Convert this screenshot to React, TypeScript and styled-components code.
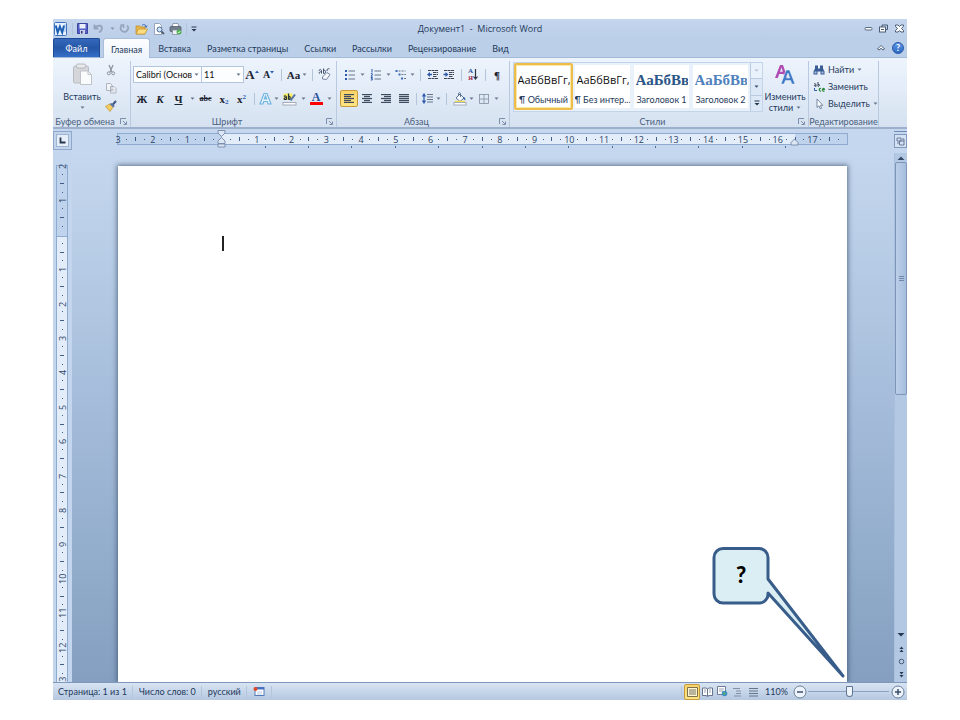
import React from "react";
import styled, { createGlobalStyle, css } from "styled-components";

const UI = `Lato, Roboto, "Open Sans", sans-serif`;
const HUMANIST = `"Open Sans", "Noto Sans", sans-serif`;
const SERIF = `"Liberation Serif", serif`;
const INK = "#1e395b";

const GlobalStyle = createGlobalStyle`
  *, *::before, *::after { box-sizing: border-box; }
  body { margin: 0; background: #fff; font-family: ${UI}; font-size: 9px; color: ${INK}; }
  button, input { font: inherit; color: inherit; }
  button { background: none; border: 0; padding: 0; margin: 0; }
  svg { display: block; flex: none; }
`;

const Stage = styled.div`
  display: flex;
  min-height: 100vh;
  padding: 19px 53px 20px;
`;

const Window = styled.div`
  position: relative;
  flex: 1;
  min-width: 0;
  display: flex;
  flex-direction: column;
  background: #bfd2ea;
`;

/* ---------- title bar ---------- */
const TitleBar = styled.header`
  display: grid;
  grid-template-columns: 1fr auto 1fr;
  align-items: center;
  height: 19px;
  background: linear-gradient(#c4d6ee, #bccfe8);
`;

const QuickAccess = styled.div`
  display: flex;
  align-items: center;
  padding-left: 1px;
`;

const Title = styled.h1`
  margin: 0;
  font-family: ${HUMANIST};
  font-size: 9px;
  font-weight: 400;
  line-height: 12px;
  white-space: pre;
`;

const WindowButtons = styled.div`
  display: flex;
  justify-content: flex-end;
`;

const Slot = styled.button<{ $w: number; $h?: number; $on?: boolean }>`
  display: flex;
  align-items: center;
  justify-content: center;
  flex: none;
  width: ${(p) => p.$w}px;
  height: ${(p) => p.$h ?? 16}px;
  ${(p) =>
    p.$on &&
    css`
      border: 1px solid #c79a3c;
      border-radius: 2px;
      background: linear-gradient(#fbd46a, #ffe584);
    `}
`;

const SepBox = styled.span<{ $w: number }>`
  display: flex;
  justify-content: center;
  flex: none;
  width: ${(p) => p.$w}px;
  height: 12px;
  &::before {
    content: "";
    width: 1px;
    background: #b3c4db;
  }
`;

/* ---------- tabs ---------- */
const TabBar = styled.nav`
  display: flex;
  align-items: stretch;
  height: 20px;
  background: #bccfe8;
  border-bottom: 1px solid #a3b9d8;
`;

const FileTab = styled.button`
  width: 47px;
  margin-right: 3px;
  color: #fff;
  border: 1px solid #1d4a94;
  border-bottom: 0;
  border-radius: 2px 2px 0 0;
  background: linear-gradient(#3568bb, #2557a8 50%, #3470c8);
`;

const Tab = styled.button<{ $active?: boolean }>`
  padding: 2px 8px 0;
  white-space: nowrap;
  ${(p) =>
    p.$active &&
    css`
      padding: 1px 7px 0;
      margin-bottom: -1px;
      border: 1px solid #a9bfdc;
      border-bottom: 0;
      border-radius: 3px 3px 0 0;
      background: linear-gradient(#fdfeff, #eef4fc);
    `}
`;

const TabEnd = styled.div`
  display: flex;
  align-items: center;
  margin-left: auto;
`;

/* ---------- ribbon ---------- */
const Ribbon = styled.section`
  display: flex;
  height: 71px;
  padding-top: 3px;
  background: linear-gradient(#edf4fc, #dfe9f6 60%, #d5e1f0);
  border-bottom: 2px solid #9cb0cc;
`;

const GroupBox = styled.div<{ $w?: number }>`
  display: flex;
  flex-direction: column;
  flex: none;
  ${(p) => (p.$w ? `width: ${p.$w}px;` : "")}
  border-right: 1px solid #b9c9df;
`;

const GroupBody = styled.div<{ $pad?: number }>`
  display: flex;
  flex: 1;
  min-height: 0;
  padding-left: ${(p) => p.$pad ?? 0}px;
`;

const GroupFooter = styled.div`
  display: flex;
  align-items: center;
  height: 12px;
  color: #4a5f80;
`;

const GroupTitle = styled.span`
  flex: 1;
  text-align: center;
  white-space: nowrap;
`;

const Rows = styled.div`
  display: flex;
  flex-direction: column;
  gap: 7px;
  padding-top: 5px;
`;

const Row = styled.div`
  display: flex;
  align-items: center;
  height: 17px;
`;

const SmallCol = styled.div`
  display: flex;
  flex-direction: column;
  gap: 1px;
`;

const BigButton = styled.button<{ $w: number }>`
  display: flex;
  flex-direction: column;
  align-items: center;
  width: ${(p) => p.$w}px;
  padding-top: 2px;
  line-height: 11px;
  & > svg { margin-bottom: 6px; }
`;

const BigLabel = styled.span`
  display: flex;
  align-items: center;
  gap: 3px;
  height: 11px;
`;

const Combo = styled.label<{ $w: number }>`
  display: flex;
  align-items: center;
  width: ${(p) => p.$w}px;
  height: 17px;
  padding: 0 2px;
  border: 1px solid #b4c6de;
  background: #fbfdff;
  color: #111;
  & + & { border-left: 0; }
  input {
    flex: 1;
    min-width: 0;
    padding: 0;
    border: 0;
    outline: 0;
    background: none;
  }
`;

const Glyph = styled.span<{ $size?: number; $italic?: boolean; $u?: boolean; $strike?: boolean }>`
  font-family: ${SERIF};
  font-weight: 700;
  font-size: ${(p) => p.$size ?? 11}px;
  line-height: 12px;
  color: #1c2430;
  font-style: ${(p) => (p.$italic ? "italic" : "normal")};
  text-decoration: ${(p) => (p.$u ? "underline" : p.$strike ? "line-through" : "none")};
  sub, sup { font-size: 7px; line-height: 0; color: #2a5db0; }
  sub { vertical-align: -1px; }
  sup { vertical-align: 4px; }
`;

const Gallery = styled.div`
  display: flex;
  flex: none;
  height: 50px;
  margin-top: 1px;
  border: 1px solid #c3d3e8;
  background: #e9f1fb;
`;

const StyleCard = styled.button<{ $on?: boolean }>`
  display: flex;
  flex-direction: column;
  align-items: center;
  width: 59px;
  height: 47px;
  overflow: hidden;
  border: 2px solid ${(p) => (p.$on ? "#ecbd4b" : "#e9f1fb")};
  border-radius: 2px;
  background: #fff;
  box-shadow: ${(p) => (p.$on ? "inset 0 0 0 1px #fde9a6" : "none")};
`;

const Sample = styled.span<{ $heading?: string }>`
  display: block;
  width: 52px;
  height: 29px;
  overflow: hidden;
  text-align: left;
  white-space: nowrap;
  line-height: 30px;
  color: ${(p) => p.$heading ?? "#111"};
  font-family: ${(p) => (p.$heading ? SERIF : HUMANIST)};
  font-weight: ${(p) => (p.$heading ? 700 : 400)};
  font-size: ${(p) => (p.$heading ? 15 : 11)}px;
`;

const StyleName = styled.span`
  line-height: 12px;
  white-space: nowrap;
`;

const GalleryNav = styled.div`
  display: flex;
  flex-direction: column;
  width: 12px;
  border-left: 1px solid #b9cae2;
  button { flex: 1; display: flex; align-items: center; justify-content: center; }
  button + button { border-top: 1px solid #b9cae2; background: #dde8f6; }
`;

const EditList = styled.div`
  display: flex;
  flex-direction: column;
  padding-left: 4px;
`;

const EditButton = styled.button`
  display: flex;
  align-items: center;
  gap: 3px;
  height: 17px;
  white-space: nowrap;
`;

/* ---------- rulers and work area ---------- */
const RulerRow = styled.div`
  display: flex;
  height: 24px;
  padding-top: 2px;
  background: #c5d7ee;
`;

const TabSelector = styled.button`
  display: flex;
  align-items: center;
  justify-content: center;
  width: 19px;
  height: 19px;
  border: 1px solid #8ea8cb;
  background: #e6effa;
  box-shadow: inset 0 0 0 2px #c2d4ec, inset 0 0 0 3px #9db4d3;
`;

const HRuler = styled.div`
  position: relative;
  flex: 1;
  margin: 2px 47px 0 46px;
  font-family: ${HUMANIST};
`;

const HScale = styled.div`
  display: flex;
  height: 12px;
  border: solid #8fabcf;
  border-width: 1px 0;
  box-shadow: 1px 0 #8fabcf, -1px 0 #8fabcf;
  background: linear-gradient(90deg, #c0d3ec 14.3%, #e3edfa 14.3% 92.9%, #c0d3ec 92.9%);
`;

const HCell = styled.div`
  display: flex;
  flex: 1;
  align-items: center;
  justify-content: space-between;
`;

const Label = styled.span`
  display: flex;
  align-items: center;
  justify-content: center;
  width: 0;
  height: 0;
  color: #2c4568;
`;

const VLabel = styled(Label)`
  writing-mode: vertical-rl;
  transform: rotate(180deg);
`;

const Dot = styled.i`
  width: 1px;
  height: 1px;
  background: #3f5d88;
`;
const Tick = styled.i<{ $v?: boolean }>`
  width: ${(p) => (p.$v ? 4 : 1)}px;
  height: ${(p) => (p.$v ? 1 : 4)}px;
  background: #3f5d88;
`;
const End = styled.i`
  width: 0;
  height: 0;
`;

const TabStops = styled.div`
  display: grid;
  grid-template-columns: 12fr repeat(13, 5fr) 7fr;
  height: 2px;
  margin-top: 1px;
  i { border-right: 1px solid #4c6c98; }
  i:first-child, i:last-child { border: 0; }
`;

const IndentLeft = styled.span`
  position: absolute;
  left: 14.3%;
  top: -3px;
  margin-left: -5px;
`;
const IndentRight = styled.span`
  position: absolute;
  left: 92.9%;
  top: 5px;
  margin-left: -5px;
`;

const RulerToggle = styled.button`
  display: flex;
  align-items: center;
  justify-content: center;
  width: 13px;
  height: 14px;
  margin-top: 3px;
  border: 1px solid #7f99bd;
  background: #d5e2f3;
  box-shadow: 0 -2px #c5d7ee, 0 -3px #6f8bb3;
`;

const Work = styled.div`
  display: flex;
  flex: 1;
  min-height: 0;
  background: linear-gradient(#c5d7ee, #a6bedb 45%, #849fc0);
`;

const VRulerStrip = styled.div`
  width: 19px;
  padding: 12px 4px 0 3px;
  overflow: hidden;
  font-family: ${HUMANIST};
  background: #c3d6ee;
`;

const VScale = styled.div`
  display: flex;
  flex-direction: column;
  height: 100%;
  border: solid #8fabcf;
  border-width: 1px 1px 0;
  background: linear-gradient(#c0d3ec 13.6%, #8fabcf 13.6% 13.8%, #e3edfa 13.8%);
`;

const VCell = styled.div`
  display: flex;
  flex: 1;
  flex-direction: column;
  align-items: center;
  justify-content: space-between;
`;

const VTail = styled.div`
  display: flex;
  justify-content: center;
`;

const Canvas = styled.main`
  display: flex;
  flex: 1;
  padding: 13px 47px 0 46px;
  overflow: hidden;
`;

const Page = styled.article`
  flex: 1;
  padding: 70px 104px 0;
  background: #fff;
  box-shadow: 0 0 5px 1px rgba(50, 70, 100, 0.7);
`;

const Caret = styled.span`
  display: block;
  width: 2px;
  height: 15px;
  background: #222;
`;

const ScrollBar = styled.aside`
  display: flex;
  flex-direction: column;
  align-items: center;
  width: 13px;
  background: #b3c8e3;
  border-left: 1px solid #a9bfdc;
`;

const Thumb = styled.div`
  display: flex;
  align-items: center;
  justify-content: center;
  align-self: stretch;
  height: 44%;
  border: 1px solid #7d96b8;
  border-radius: 2px;
  background: linear-gradient(90deg, #bccfe9, #a5bddc);
`;

const ScrollFoot = styled.div`
  display: flex;
  flex-direction: column;
  align-items: center;
  align-self: stretch;
  margin-top: auto;
`;

/* ---------- status bar ---------- */
const StatusBar = styled.footer`
  display: flex;
  align-items: center;
  height: 18px;
  padding-left: 5px;
  border-top: 1px solid #7f99bd;
  background: linear-gradient(#d8e4f3, #b5c8e0);
`;

const StatusItem = styled.button`
  white-space: nowrap;
`;

const StatusRight = styled.div`
  display: flex;
  align-items: center;
  margin-left: auto;
`;

const ZoomValue = styled.button`
  width: 31px;
  text-align: center;
`;

const ZoomSlider = styled.input`
  width: 81px;
  height: 14px;
  margin: 0;
  appearance: none;
  background: linear-gradient(#8da3c0, #8da3c0) center / 100% 1px no-repeat;
  &::-webkit-slider-thumb {
    appearance: none;
    width: 7px;
    height: 11px;
    border: 1px solid #5f7696;
    border-radius: 1px 1px 4px 4px;
    background: #f0f5fb;
  }
`;

const Callout = styled.div`
  position: absolute;
  right: 60px;
  bottom: 20px;
  width: 135px;
  height: 134px;
`;

const CalloutText = styled.strong`
  position: absolute;
  left: 0;
  top: 16px;
  width: 58px;
  text-align: center;
  font-family: Lato, ${UI};
  font-size: 22px;
  font-weight: 900;
  line-height: 26px;
  color: #000;
`;

/* ---------- icons ---------- */
type IconProps = { w?: number; h?: number; children: React.ReactNode };
const Icon = ({ w = 14, h = 14, children }: IconProps) => (
  <svg width={w} height={h} viewBox={`0 0 ${w} ${h}`} fill="none" aria-hidden="true">
    {children}
  </svg>
);

const Down = ({ c = "#66758c" }: { c?: string }) => (
  <Icon w={5} h={3}>
    <path d="M0.500 0.500h4L2.500 2.700z" fill={c} />
  </Icon>
);

const WordLogo = () => (
  <Icon>
    <rect x="0.500" y="0.500" width="12" height="13" rx="1" fill="#e9f2fd" stroke="#3d74c0" />
    <path d="M10 3h2M10 5h2M10 7h2M10 9h2" stroke="#8fb0e0" strokeWidth="0.800" />
    <path d="M1.800 3.500L3.700 10.500 5.900 4.500 8.200 10.500 10 3.500" stroke="#1b5fb4" strokeWidth="2" />
  </Icon>
);
const Save = () => (
  <Icon w={11} h={11}>
    <path d="M0.500 0.500h10v10h-10z" fill="#5560c4" stroke="#3c46a0" />
    <path d="M2.500 1h6v4.500h-6z" fill="#e8eefc" />
    <path d="M3 7h5v4H3z" fill="#c9cfe8" />
    <path d="M4 8h1.500v2.500H4z" fill="#2b3278" />
  </Icon>
);
const Undo = () => (
  <Icon w={11} h={11}>
    <path d="M1.500 1.500v4h4M2 5C4 1.500 9 2 9 5.500c0 2-1.500 3-3 4" stroke="#93a3bc" strokeWidth="1.800" />
  </Icon>
);
const Redo = () => (
  <Icon w={11} h={11}>
    <path d="M8 2.500a3.700 3.700 0 1 1-5.500.3M1.500 2H4.500v3" stroke="#93a3bc" strokeWidth="1.600" />
  </Icon>
);
const Open = () => (
  <Icon w={13} h={12}>
    <path d="M1 3h4l1 1h4v7H1z" fill="#e8b84a" stroke="#b98824" strokeWidth="0.700" />
    <path d="M1 11l2.500-5H12.500L10 11z" fill="#fbdc7e" stroke="#c08f2c" strokeWidth="0.700" />
    <path d="M7 2.500C8.500 1 10.500 1 11 3.500M9.700 2.800L11 4.300l1.200-1.700" stroke="#3a66ad" />
  </Icon>
);
const Preview = () => (
  <Icon w={12} h={12}>
    <path d="M1.500 0.500h5l2 2v9h-7z" fill="#fff" stroke="#8593a8" strokeWidth="0.800" />
    <circle cx="6.500" cy="6.500" r="2.500" fill="#cfe3f8" stroke="#4a6a94" />
    <path d="M8.500 8.500l2.500 2.500" stroke="#4f5d70" strokeWidth="1.800" />
  </Icon>
);
const Print = () => (
  <Icon w={13} h={12}>
    <path d="M4 0.500h5l1 4H3z" fill="#fff" stroke="#7d8797" strokeWidth="0.800" />
    <rect x="1" y="3.500" width="11" height="5" rx="1" fill="#727d8c" stroke="#48525f" strokeWidth="0.700" />
    <path d="M3.500 7h6v4.500h-6z" fill="#eef2f7" stroke="#7d8797" strokeWidth="0.700" />
    <circle cx="10" cy="9" r="2.500" fill="#4fae52" />
    <path d="M8.800 9l1 1 1.500-2" stroke="#fff" strokeWidth="0.800" />
  </Icon>
);
const QatMenu = () => (
  <Icon w={6} h={6}>
    <path d="M0.500 0.500h5v1h-5zM0.500 3h5L3 5.500z" fill="#26374f" />
  </Icon>
);
const Minimize = () => (
  <Icon w={9} h={9}>
    <rect x="1" y="3.500" width="7" height="2.500" rx="1" fill="#fff" stroke="#5a6b84" />
  </Icon>
);
const Restore = () => (
  <Icon w={9} h={9}>
    <path d="M3 3V1h5.500v4.500H6.500" stroke="#4a5b75" />
    <rect x="0.500" y="3" width="6" height="5" fill="#fff" stroke="#4a5b75" />
    <path d="M2 5.500h3" stroke="#4a5b75" />
  </Icon>
);
const Close = () => (
  <Icon w={9} h={9}>
    <path d="M.5 1h2.500l1.500 1.500L6 1h2.500v1.300L6.500 4.500l2 2v1.500H6L4.500 6.500 3 8H.5V6.500l2-2-2-2.200z" fill="#fff" stroke="#4a5b75" />
  </Icon>
);
const Collapse = () => (
  <Icon w={8} h={7}>
    <path d="M0.500 5L4 1.500 7.500 5 6 6 4 4.300 2 6z" fill="#fff" stroke="#40526e" strokeWidth="0.900" />
  </Icon>
);
const HelpMark = styled.span`
  display: flex;
  align-items: center;
  justify-content: center;
  width: 12px;
  height: 12px;
  border: 1px solid #2457a8;
  border-radius: 50%;
  background: linear-gradient(#5b94e4, #2f69c4);
  color: #fff;
  font-size: 9px;
  font-weight: 700;
  line-height: 10px;
`;

const Paste = () => (
  <Icon w={22} h={22}>
    <rect x="2.500" y="3" width="15" height="17" rx="1.500" fill="#d4d6da" stroke="#b9bcc2" />
    <rect x="5.500" y="1" width="9" height="4" rx="1.500" fill="#e8e9eb" stroke="#a8abb2" strokeWidth="0.800" />
    <path d="M9.500 8h7.500l3.500 3.500v10H9.500z" fill="#fafbfc" stroke="#bfc3ca" />
    <path d="M17 8v3.500h3.500" stroke="#bfc3ca" />
  </Icon>
);
const Cut = () => (
  <Icon w={12} h={12}>
    <path d="M4 1l3 7M8 1L5 8" stroke="#8d949f" strokeWidth="1.300" />
    <circle cx="3.800" cy="9.300" r="1.500" stroke="#8d949f" />
    <circle cx="8.200" cy="9.300" r="1.500" stroke="#8d949f" />
  </Icon>
);
const Copy = () => (
  <Icon w={12} h={12}>
    <path d="M1.500 1.500h4l1.500 1.500v5.500H1.500zM5.500 4.500h3.500l2 2v4.500H5.500z" fill="#f1f3f6" stroke="#a7aeb9" strokeWidth="0.900" />
    <path d="M6.500 7.500h3M6.500 9h3" stroke="#b8bec8" strokeWidth="0.700" />
  </Icon>
);
const Painter = () => (
  <Icon w={12} h={12}>
    <path d="M0.500 6.500l4-2.500 3.500 3-3 4.500z" fill="#f3cc62" stroke="#ba8f2b" strokeWidth="0.700" />
    <path d="M4.500 4l4 3.500 1.300-1.500L6.500 3z" fill="#5874a8" />
    <path d="M7.800 4.500L11 1" stroke="#3d5686" strokeWidth="2" />
  </Icon>
);
const Launcher = () => (
  <Icon w={7} h={7}>
    <path d="M0.500 6V0.500H6M3 3l3 3M6.500 3.500v3h-3" stroke="#7286a3" strokeWidth="0.900" />
  </Icon>
);
const Eraser = () => (
  <Icon w={13} h={13}>
    <path d="M4.500 9l4.500-4.500 3 2-3.500 5-4-.5z" fill="#f5f7fb" stroke="#6b7b98" strokeWidth="0.900" />
    <path d="M1 3c0-2 2.500-2 2.500 0V5.500M3.500 3.700C1 3.500.5 5.500 2 5.500M5.500 .5v5M5.500 3c1-1.500 2.500-.5 2 1.500-.5 1-1.500 1-2 .5M11.500 1C9.500 0 8.800 1.500 9.200 3" stroke="#44536f" />
  </Icon>
);
const TextEffect = () => (
  <Icon w={13} h={13}>
    <path d="M1 12L5 1.500h3L12 12H9L8.200 9.500H4.700L4 12zM5.400 7h2.200L6.500 4z" fill="#eaf6fe" stroke="#72b3df" strokeWidth="1.200" />
  </Icon>
);
const Highlight = () => (
  <Icon w={15} h={14}>
    <path d="M1.500 8h9V1.500h-9z" fill="#f6ef66" />
    <path d="M2 4.500c1-1 2.500-.5 2.500 1v2.200M4.500 5.500C2 5.300 1.500 7.500 3 7.500h1.500M6.500 1.500v6M6.500 4.500c2-1.200 2.500 3 0 3" stroke="#26303f" strokeWidth="1.200" />
    <path d="M8.500 8.500l4.500-6" stroke="#52719f" strokeWidth="2" />
    <rect x="1" y="10.500" width="13" height="2.500" fill="#fff" stroke="#9aa5b5" strokeWidth="0.900" />
  </Icon>
);
const ColorGlyph = styled.span`
  display: flex;
  flex-direction: column;
  align-items: center;
  width: 13px;
  border-bottom: 3px solid #f00;
  font: 700 12px/10px ${SERIF};
  color: #26509b;
`;
const SizeMark = ({ down }: { down?: boolean }) => (
  <Icon w={4} h={10}>
    <path d={down ? "M0 1h4L2 3.500z" : "M0 3h4L2 0.500z"} fill="#2a5db0" />
  </Icon>
);
const Bullets = () => (
  <Icon w={11} h={11}>
    <path d="M1 1h2v2H1zM1 5h2v2H1zM1 9h2v2H1z" fill="#2d5aa8" />
    <path d="M4.500 2H11M4.500 6H11M4.500 10H11" stroke="#66758c" />
  </Icon>
);
const Numbers = () => (
  <Icon w={11} h={12}>
    <path d="M2 0v3.500M.8 4.700h1.500v1L1 7.200h1.700M.8 8.500h1.500l-1 1h1v1.500H.8" stroke="#2d5aa8" />
    <path d="M4.500 2H11M4.500 6H11M4.500 10H11" stroke="#66758c" />
  </Icon>
);
const Multi = () => (
  <Icon w={12} h={12}>
    <path d="M0.500 1h2v2h-2zM3.500 4.500h2v2h-2zM6 8.500h2v2H6z" fill="#3f6bb8" />
    <path d="M3.500 2h7M6.500 5.500H11M9 9.500h2.500" stroke="#66758c" strokeDasharray="2 1" />
  </Icon>
);
const Indent = ({ out }: { out?: boolean }) => (
  <Icon w={11} h={11}>
    <path d="M1 1.500h10M6 3.500h5M6 5.500h5M6 7.500h4M1 9.500h10" stroke="#3c4656" strokeWidth="1.200" strokeDasharray="3 0.500" />
    <path d={out ? "M0 5.500l3-2.500v1.700h2v1.600H3v1.700z" : "M5.500 5.500l-3-2.500v1.700h-2v1.600h2v1.700z"} fill="#2d5aa8" />
  </Icon>
);
const SortStack = styled.span`
  display: flex;
  flex-direction: column;
  font: 700 7px/7px ${SERIF};
  color: #26509b;
  b + b { color: #a32a4c; }
`;
const SortArrow = () => (
  <Icon w={5} h={11}>
    <path d="M2.500 0v10M0.500 7.500L2.500 10l2-2.500" stroke="#2b3442" strokeWidth="1.200" />
  </Icon>
);
const Align = ({ x, s }: { x: number; s: number }) => (
  <Icon w={10} h={9}>
    {[0, 1, 2, 3, 4].map((i) => (
      <path key={i} d={i % 2 ? `M${x} ${i * 2 + 0.5}h${s}` : `M0 ${i * 2 + 0.5}h10`} stroke="#3f4a5c" strokeWidth="1.300" />
    ))}
  </Icon>
);
const Spacing = () => (
  <Icon w={11} h={11}>
    <path d="M2 1v9M.5 3.500L2 1l1.500 2.500M.5 7.500L2 10l1.500-2.500" stroke="#2d5aa8" strokeWidth="1.200" />
    <path d="M5 1.500h6M5 4h6M5 6.500h6M5 9h6" stroke="#66758c" strokeWidth="1.200" />
  </Icon>
);
const Fill = () => (
  <Icon w={14} h={14}>
    <path d="M3 6l4-4 4 4-4 3.500z" fill="#f4f7fb" stroke="#51668b" strokeWidth="0.900" />
    <path d="M5.500 3.500V1.500c0-1 2-1 2 0V5" stroke="#51668b" strokeWidth="0.900" />
    <path d="M10.500 5c2 .5 2 2 1.800 3.500L10 6.500z" fill="#2d5aa8" />
    <path d="M2 9.500h10" stroke="#f2e04f" strokeWidth="1.500" />
    <rect x="1" y="10.500" width="12" height="2.500" fill="#fff" stroke="#9aa5b5" strokeWidth="0.900" />
  </Icon>
);
const Borders = () => (
  <Icon w={10} h={10}>
    <path d="M0.500 0v9.500h9V0M0 0.500h10M5 0v9.500M0.500 5h9" stroke="#8b97aa" strokeWidth="0.900" />
  </Icon>
);
const ChangeStyles = () => (
  <Icon w={22} h={22}>
    <path d="M1 15L6 2h3l4.500 13h-2.800L9.500 11H5.200L3.800 15zM6 8.800h2.800L7.500 4.500z" fill="#b04bb4" />
    <path d="M7 21L12.200 7h3.300L21 21h-3.200l-1.200-3.500h-5.200L10 21zM12 15h3.700L14 10z" fill="#3f78c5" stroke="#eef4fc" strokeWidth="0.500" />
  </Icon>
);
const Find = () => (
  <Icon w={12} h={12}>
    <path d="M2 1.500h3v3h2v-3h3v3l1.500 3v3h-4V7.500h-3v3h-4v-3L2 4.500z" fill="#3a5c94" />
    <path d="M1.500 7.500h2v2h-2zM8.500 7.500h2v2h-2z" fill="#a9c1e4" />
  </Icon>
);
const Replace = () => (
  <Icon w={12} h={12}>
    <path d="M1 3c1-1 2 0 2 1v1.500M3 4C.8 4 .8 5.500 3 5.200M5 1v4.300M5 3.500c2-.8 2 2 0 1.800" stroke="#39465a" />
    <path d="M8 7.500C6 6.500 5.500 10.500 8 10M9.500 8.500h2C11 6.500 9 7.500 9.500 9.500c.5 1 2 .5 2 .5" stroke="#2f8a3a" strokeWidth="1.200" />
    <path d="M1.500 7v2.500H4" stroke="#2d5aa8" />
  </Icon>
);
const Pointer = () => (
  <Icon w={12} h={12}>
    <path d="M4 1v8.500l2-1.700 1.300 3 1.300-.6-1.300-2.900h2.500z" fill="#fff" stroke="#5c6f8e" strokeWidth="0.800" />
  </Icon>
);
const Macro = () => (
  <Icon w={12} h={11}>
    <rect x="2" y="1.500" width="9" height="8" fill="#fff" stroke="#5279b8" />
    <path d="M2 2.500h9" stroke="#4471bd" strokeWidth="2" />
    <path d="M4 6h5M4 8h5" stroke="#a7bcde" strokeWidth="0.800" />
    <circle cx="2.500" cy="3" r="2" fill="#df4a2a" />
  </Icon>
);
const Lines = ({ box }: { box?: boolean }) => (
  <Icon w={11} h={10}>
    {box && <path d="M0.500 0.500h10v9h-10z" fill="#fff6cf" stroke="#7c7148" />}
    <path d={box ? "M2 3h7M2 5h7M2 7h7" : "M1 1.500h9M1 4h9M1 6.500h9M1 9h9"} stroke={box ? "#75746a" : "#66748a"} />
  </Icon>
);
const Book = () => (
  <Icon w={11} h={10}>
    <path d="M0.500 1h3.500L5.500 2 7 1h3.500v7.500H7L5.500 9.500 4 8.500H0.500zM5.500 2v7" fill="#fff" stroke="#596880" strokeWidth="0.900" />
    <path d="M2 3h2M2 5h2M7 3h2M7 5h2" stroke="#7c899e" strokeWidth="0.800" />
  </Icon>
);
const Web = () => (
  <Icon w={11} h={11}>
    <path d="M0.500 0.500h8v8h-8z" fill="#fff" stroke="#6d7c94" />
    <path d="M2 3h5M2 5h4" stroke="#7c899e" strokeWidth="0.800" />
    <circle cx="7.500" cy="7.500" r="2.800" fill="#3f8fc0" />
    <path d="M6 7l1.500-1 1 1.500L7 9z" fill="#62b560" />
  </Icon>
);
const Outline = () => (
  <Icon w={11} h={10}>
    <path d="M1 1.500h7M4 4h5M4 6.500h5M2 9h7" stroke="#8490a4" />
  </Icon>
);
const Circle = ({ plus }: { plus?: boolean }) => (
  <Icon w={14} h={14}>
    <circle cx="7" cy="7" r="6" fill="#edf3fa" stroke="#6c7f9b" />
    <path d={plus ? "M4 7h6M7 4v6" : "M4 7h6"} stroke="#3d4f6a" strokeWidth="1.500" />
  </Icon>
);

/* ---------- composition ---------- */
type ToolDef = { w: number; icon?: React.ReactNode; name?: string; kind?: "sep" | "arrow"; on?: boolean };
const sep = (w: number): ToolDef => ({ w, kind: "sep" });
const arrow = (w: number): ToolDef => ({ w, kind: "arrow" });
const tool = (w: number, name: string, icon: React.ReactNode, on = false): ToolDef => ({ w, name, icon, on });

const Tools = ({ items }: { items: ToolDef[] }) => (
  <>
    {items.map((t, i) =>
      t.kind === "sep" ? (
        <SepBox key={i} $w={t.w} />
      ) : (
        <Slot key={i} $w={t.w} $h={17} $on={t.on} aria-label={t.name ?? "Меню"}>
          {t.kind === "arrow" ? <Down /> : t.icon}
        </Slot>
      )
    )}
  </>
);

type GroupProps = { title: string; w: number; pad?: number; launcher?: boolean; children: React.ReactNode };
const Group = ({ title, w, pad, launcher = true, children }: GroupProps) => (
  <GroupBox $w={w}>
    <GroupBody $pad={pad}>{children}</GroupBody>
    <GroupFooter>
      <GroupTitle>{title}</GroupTitle>
      {launcher && (
        <Slot $w={13} $h={12} aria-label={`${title}: параметры`}>
          <Launcher />
        </Slot>
      )}
    </GroupFooter>
  </GroupBox>
);

const fontTop = [
  tool(16, "Увеличить размер", <><Glyph $size={13}>A</Glyph><SizeMark /></>),
  tool(17, "Уменьшить размер", <><Glyph $size={10}>A</Glyph><SizeMark down /></>),
  sep(9),
  tool(15, "Регистр", <Glyph>Aa</Glyph>),
  arrow(7),
  sep(9),
  tool(14, "Очистить формат", <Eraser />),
];
const fontBottom = [
  tool(18, "Полужирный", <Glyph>Ж</Glyph>),
  tool(18, "Курсив", <Glyph $italic>К</Glyph>),
  tool(19, "Подчёркнутый", <Glyph $u>Ч</Glyph>),
  arrow(8),
  tool(19, "Зачёркнутый", <Glyph $size={8} $strike>abc</Glyph>),
  tool(18, "Подстрочный", <Glyph>x<sub>2</sub></Glyph>),
  tool(17, "Надстрочный", <Glyph>x<sup>2</sup></Glyph>),
  sep(8),
  tool(15, "Текстовые эффекты", <TextEffect />),
  arrow(7),
  tool(19, "Цвет выделения", <Highlight />),
  arrow(8),
  tool(18, "Цвет текста", <ColorGlyph>A</ColorGlyph>),
  arrow(8),
];
const paraTop = [
  tool(18, "Маркеры", <Bullets />),
  arrow(8),
  tool(19, "Нумерация", <Numbers />),
  arrow(7),
  tool(17, "Многоуровневый список", <Multi />),
  arrow(7),
  sep(8),
  tool(16, "Уменьшить отступ", <Indent out />),
  tool(17, "Увеличить отступ", <Indent />),
  sep(8),
  tool(16, "Сортировка", <><SortStack><b>А</b><b>Я</b></SortStack><SortArrow /></>),
  sep(9),
  tool(14, "Знаки абзаца", <Glyph>¶</Glyph>),
];
const paraBottom = [
  tool(18, "По левому краю", <Align x={0} s={7} />, true),
  tool(18, "По центру", <Align x={2} s={6} />),
  tool(19, "По правому краю", <Align x={3} s={7} />),
  tool(17, "По ширине", <Align x={0} s={10} />),
  sep(8),
  tool(15, "Интервал", <Spacing />),
  arrow(7),
  sep(9),
  tool(17, "Заливка", <Fill />),
  arrow(7),
  tool(17, "Границы", <Borders />),
  arrow(8),
];

const cards = [
  { name: "¶ Обычный", sample: "АаБбВвГг,", on: true },
  { name: "¶ Без интер...", sample: "АаБбВвГг," },
  { name: "Заголовок 1", sample: "АаБбВв", color: "#2b5687" },
  { name: "Заголовок 2", sample: "АаБбВв", color: "#4f81bd" },
];

const tabs = ["Главная", "Вставка", "Разметка страницы", "Ссылки", "Рассылки", "Рецензирование", "Вид"];

const range = (from: number, to: number) => Array.from({ length: to - from }, (_, i) => from + i);

export default function App() {
  return (
    <>
      <GlobalStyle />
      <Stage>
        <Window>
          <TitleBar>
            <QuickAccess>
              <Slot $w={14} aria-label="Word"><WordLogo /></Slot>
              <SepBox $w={8} />
              <Slot $w={12} aria-label="Сохранить"><Save /></Slot>
              <Slot $w={20} aria-label="Отменить"><Undo /></Slot>
              <Slot $w={8} aria-label="Меню"><Down c="#8592a8" /></Slot>
              <Slot $w={16} aria-label="Повторить"><Redo /></Slot>
              <Slot $w={18} aria-label="Открыть"><Open /></Slot>
              <Slot $w={17} aria-label="Просмотр"><Preview /></Slot>
              <Slot $w={17} aria-label="Печать"><Print /></Slot>
              <SepBox $w={5} />
              <Slot $w={9} aria-label="Настройка панели"><QatMenu /></Slot>
            </QuickAccess>
            <Title>{"Документ1  -  Microsoft Word"}</Title>
            <WindowButtons>
              <Slot $w={15} aria-label="Свернуть"><Minimize /></Slot>
              <Slot $w={15} aria-label="Восстановить"><Restore /></Slot>
              <Slot $w={16} aria-label="Закрыть"><Close /></Slot>
            </WindowButtons>
          </TitleBar>

          <TabBar>
            <FileTab>Файл</FileTab>
            {tabs.map((t, i) => (
              <Tab key={t} $active={i === 0}>{t}</Tab>
            ))}
            <TabEnd>
              <Slot $w={17} aria-label="Свернуть ленту"><Collapse /></Slot>
              <Slot $w={18} aria-label="Справка"><HelpMark>?</HelpMark></Slot>
            </TabEnd>
          </TabBar>

          <Ribbon>
            <Group title="Буфер обмена" w={78} pad={5}>
              <BigButton $w={48}>
                <Paste />
                <BigLabel>Вставить</BigLabel>
                <BigLabel><Down /></BigLabel>
              </BigButton>
              <SmallCol>
                <Slot $w={10} $h={17} aria-label="Вырезать"><Cut /></Slot>
                <Slot $w={10} $h={17} aria-label="Копировать"><Copy /></Slot>
                <Slot $w={10} $h={17} aria-label="Формат по образцу"><Painter /></Slot>
              </SmallCol>
            </Group>

            <Group title="Шрифт" w={206} pad={2}>
              <Rows>
                <Row>
                  <Combo $w={69}>
                    <input aria-label="Шрифт" defaultValue="Calibri (Основ" />
                    <Down />
                  </Combo>
                  <Combo $w={42}>
                    <input aria-label="Размер" defaultValue="11" />
                    <Down />
                  </Combo>
                  <Tools items={fontTop} />
                </Row>
                <Row><Tools items={fontBottom} /></Row>
              </Rows>
            </Group>

            <Group title="Абзац" w={173} pad={3}>
              <Rows>
                <Row><Tools items={paraTop} /></Row>
                <Row><Tools items={paraBottom} /></Row>
              </Rows>
            </Group>

            <Group title="Стили" w={299} pad={3}>
              <Gallery>
                {cards.map((c) => (
                  <StyleCard key={c.name} $on={c.on}>
                    <Sample $heading={c.color}>{c.sample}</Sample>
                    <StyleName>{c.name}</StyleName>
                  </StyleCard>
                ))}
                <GalleryNav>
                  <button aria-label="Вверх"><Down c="#b3c0d3" /></button>
                  <button aria-label="Вниз"><Down c="#36486a" /></button>
                  <button aria-label="Ещё"><QatMenu /></button>
                </GalleryNav>
              </Gallery>
              <BigButton $w={44}>
                <ChangeStyles />
                <BigLabel>Изменить</BigLabel>
                <BigLabel>стили <Down /></BigLabel>
              </BigButton>
            </Group>

            <Group title="Редактирование" w={70} launcher={false}>
              <EditList>
                <EditButton><Find /> Найти <Down /></EditButton>
                <EditButton><Replace /> Заменить</EditButton>
                <EditButton><Pointer /> Выделить <Down /></EditButton>
              </EditList>
            </Group>
          </Ribbon>

          <RulerRow>
            <TabSelector aria-label="Выравнивание табуляции">
              <Icon w={7} h={7}><path d="M1.500 0.500v5H6.500" stroke="#26374f" strokeWidth="1.800" /></Icon>
            </TabSelector>
            <HRuler>
              <HScale>
                {range(-3, 18).map((n) => (
                  <HCell key={n}>
                    <Label>{n === 0 ? "" : Math.abs(n)}</Label>
                    <Dot /><Tick /><Dot /><End />
                  </HCell>
                ))}
              </HScale>
              <TabStops>{range(0, 15).map((n) => <i key={n} />)}</TabStops>
              <IndentLeft>
                <Icon w={9} h={18}>
                  <path d="M1 0.500h7v2.500L4.500 6.500 1 3zM1 13.500V11l3.500-3.500L8 11v2.500zM1 14h7v3H1z" fill="#dde7f4" stroke="#7488a8" strokeWidth="0.900" />
                </Icon>
              </IndentLeft>
              <IndentRight>
                <Icon w={9} h={8}>
                  <path d="M1 7V4.500L4.500 1 8 4.500V7z" fill="#dde7f4" stroke="#7488a8" strokeWidth="0.900" />
                </Icon>
              </IndentRight>
            </HRuler>
            <RulerToggle aria-label="Линейка">
              <Icon w={9} h={9}>
                <path d="M1 1h4v3H1zM3.500 4h4.500v4H3.500zM2 7V5M6 2h2v2" stroke="#5d7191" strokeWidth="0.900" />
              </Icon>
            </RulerToggle>
          </RulerRow>

          <Work>
            <VRulerStrip>
              <VScale>
                {range(-2, 13).map((n) => (
                  <VCell key={n}>
                    <VLabel>{n === 0 ? "" : Math.abs(n)}</VLabel>
                    <Dot /><Tick $v /><Dot /><End />
                  </VCell>
                ))}
                <VTail><VLabel>13</VLabel></VTail>
              </VScale>
            </VRulerStrip>
            <Canvas>
              <Page><Caret /></Page>
            </Canvas>
            <ScrollBar>
              <Slot $w={12} $h={9} aria-label="Прокрутить вверх">
                <Icon w={8} h={4}><path d="M0.500 4L4 0.500 7.500 4z" fill="#36486a" /></Icon>
              </Slot>
              <Thumb>
                <Icon w={5} h={5}><path d="M0 .5h5M0 2.500h5M0 4.500h5" stroke="#6f88ac" /></Icon>
              </Thumb>
              <ScrollFoot>
                <Slot $w={12} $h={14} aria-label="Прокрутить вниз">
                  <Icon w={8} h={4}><path d="M0.500 0L4 3.500 7.500 0z" fill="#26374f" /></Icon>
                </Slot>
                <Slot $w={12} $h={13} aria-label="Предыдущая страница">
                  <Icon w={5} h={6}><path d="M0.500 3L2.500.500 4.500 3zM0.500 6L2.500 3.500 4.500 6z" fill="#26374f" /></Icon>
                </Slot>
                <Slot $w={12} $h={13} aria-label="Выбор объекта">
                  <Icon w={7} h={7}><circle cx="3.500" cy="3.500" r="2.300" stroke="#4a5b75" /></Icon>
                </Slot>
                <Slot $w={12} $h={14} aria-label="Следующая страница">
                  <Icon w={5} h={6}><path d="M0.500 0L2.500 2.500 4.500 0zM0.500 3L2.500 5.500 4.500 3z" fill="#26374f" /></Icon>
                </Slot>
              </ScrollFoot>
            </ScrollBar>
          </Work>

          <StatusBar>
            <StatusItem>Страница: 1 из 1</StatusItem>
            <SepBox $w={12} />
            <StatusItem>Число слов: 0</StatusItem>
            <SepBox $w={12} />
            <StatusItem>русский</StatusItem>
            <SepBox $w={12} />
            <Slot $w={12} aria-label="Запись макроса"><Macro /></Slot>
            <SepBox $w={14} />
            <StatusRight>
              <SepBox $w={6} />
              <Slot $w={16} $h={16} $on aria-label="Разметка страницы"><Lines box /></Slot>
              <Slot $w={15} aria-label="Режим чтения"><Book /></Slot>
              <Slot $w={15} aria-label="Веб-документ"><Web /></Slot>
              <Slot $w={15} aria-label="Структура"><Outline /></Slot>
              <Slot $w={16} aria-label="Черновик"><Lines /></Slot>
              <ZoomValue>110%</ZoomValue>
              <Slot $w={16} aria-label="Уменьшить"><Circle /></Slot>
              <ZoomSlider type="range" min={0} max={100} defaultValue={52} aria-label="Масштаб" />
              <Slot $w={18} aria-label="Увеличить"><Circle plus /></Slot>
            </StatusRight>
          </StatusBar>

          <Callout>
            <Icon w={135} h={134}>
              <path
                d="M11 2.500H47a9 9 0 0 1 9 9V33L131 130 56 47a9 9 0 0 1-9 10H11a9 9 0 0 1-9-9V11.500a9 9 0 0 1 9-9z"
                fill="#daeef3"
                stroke="#385d8a"
                strokeWidth="3"
                strokeLinejoin="round"
              />
            </Icon>
            <CalloutText>?</CalloutText>
          </Callout>
        </Window>
      </Stage>
    </>
  );
}
